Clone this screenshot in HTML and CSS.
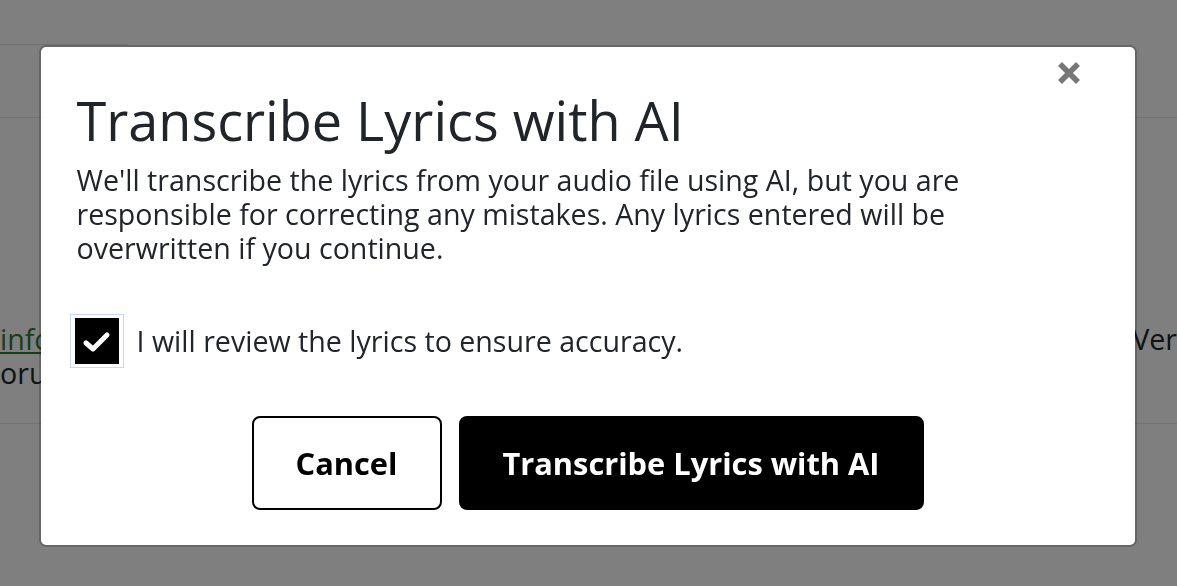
FILE: index.html
```html
<!DOCTYPE html>
<html lang="en">
<head>
<meta charset="utf-8">
<title>Transcribe Lyrics with AI</title>
<link rel="stylesheet" href="styles.css">
</head>
<body>
<div class="page">
  <div class="tabs"></div>
  <div class="header-row"></div>
  <div class="content">
    <div class="content-line">
      <a class="link" href="#">info</a>
      <span class="right-text">Ver</span>
    </div>
    <div class="content-line">
      <span>orum</span>
    </div>
  </div>
  <div class="footer-row"></div>
</div>

<div class="overlay">
  <div class="modal" role="dialog" aria-labelledby="modal-title">
    <button class="close" aria-label="Close">
      <svg width="24" height="24" viewBox="0 0 24 24"><path d="M3 3 L21 21 M21 3 L3 21" stroke="#777" stroke-width="5.5" stroke-linecap="butt" fill="none"/></svg>
    </button>
    <h1 id="modal-title" class="title">Transcribe Lyrics with AI</h1>
    <p class="desc">We'll transcribe the lyrics from your audio file using AI, but you are responsible for correcting any mistakes. Any lyrics entered will be overwritten if you continue.</p>
    <label class="check-row">
      <span class="check-ring">
        <span class="check-box">
          <svg width="44" height="46" viewBox="0 0 44 46"><path d="M11 25 L18 31 L32 17" stroke="#fff" stroke-width="5" stroke-linecap="round" stroke-linejoin="round" fill="none"/></svg>
        </span>
      </span>
      <span class="check-label">I will review the lyrics to ensure accuracy.</span>
    </label>
    <div class="actions">
      <button class="btn btn-outline">Cancel</button>
      <button class="btn btn-dark">Transcribe Lyrics with AI</button>
    </div>
  </div>
</div>
</body>
</html>
```

FILE: styles.css
```css
html, body {
  margin: 0;
  padding: 0;
  height: 100%;
  overflow: hidden;
}

body {
  font-family: "Open Sans", "Noto Sans", sans-serif;
  color: #212529;
  background: #ffffff;
}

/* background page */
.page {
  width: 100%;
}

.tabs {
  width: 128px;
  height: 44px;
  border-bottom: 1px solid #dee2e6;
}

.header-row {
  height: 72px;
  border-bottom: 1px solid #dee2e6;
}

.content {
  padding-top: 204px;
  height: 101px;
}

.content-line {
  display: flex;
  justify-content: space-between;
  font-size: 28.6px;
  line-height: 34px;
  white-space: nowrap;
}

.link {
  color: #2e7d32;
  text-decoration: underline;
}

.footer-row {
  border-bottom: 1px solid #dee2e6;
}

/* overlay + modal */
.overlay {
  position: fixed;
  inset: 0;
  background: rgba(0, 0, 0, 0.5);
  display: flex;
  justify-content: center;
  align-items: flex-start;
  padding: 45px 2px 0 0;
}

.modal {
  position: relative;
  width: 1098px;
  box-sizing: border-box;
  background: #ffffff;
  border: 2px solid rgba(0, 0, 0, 0.2);
  background-clip: padding-box;
  border-radius: 7px;
  padding: 41px 36px 35px 36px;
}

.close {
  position: absolute;
  top: 14px;
  right: 54px;
  width: 24px;
  height: 24px;
  padding: 0;
  border: 0;
  background: none;
  cursor: pointer;
}

.close svg {
  display: block;
}

.title {
  margin: 0;
  font-size: 54px;
  font-weight: 400;
  line-height: 64px;
  color: #212529;
}

.desc {
  margin: 11px 0 0 0;
  font-size: 28.6px;
  line-height: 34px;
  color: #212529;
  max-width: 900px;
}

.check-row {
  display: flex;
  align-items: center;
  gap: 13px;
  margin-top: 49px;
  margin-left: -7px;
}

.check-ring {
  display: block;
  padding: 3px 4px;
  border: 1px solid #c9d6f5;
}

.check-box {
  display: block;
  width: 44px;
  height: 46px;
  background: #000000;
}

.check-box svg {
  display: block;
}

.check-label {
  font-size: 28.6px;
  line-height: 34px;
  color: #212529;
}

.actions {
  display: flex;
  justify-content: center;
  gap: 17px;
  margin-top: 48px;
}

.btn {
  height: 94px;
  box-sizing: border-box;
  border-radius: 8px;
  font-family: "Open Sans", "Noto Sans", sans-serif;
  font-size: 30.8px;
  font-weight: 700;
  cursor: pointer;
}

.btn-outline {
  width: 190px;
  background: #ffffff;
  color: #000000;
  border: 2px solid #000000;
}

.btn-dark {
  width: 465px;
  background: #000000;
  color: #ffffff;
  border: 2px solid #000000;
}
```
